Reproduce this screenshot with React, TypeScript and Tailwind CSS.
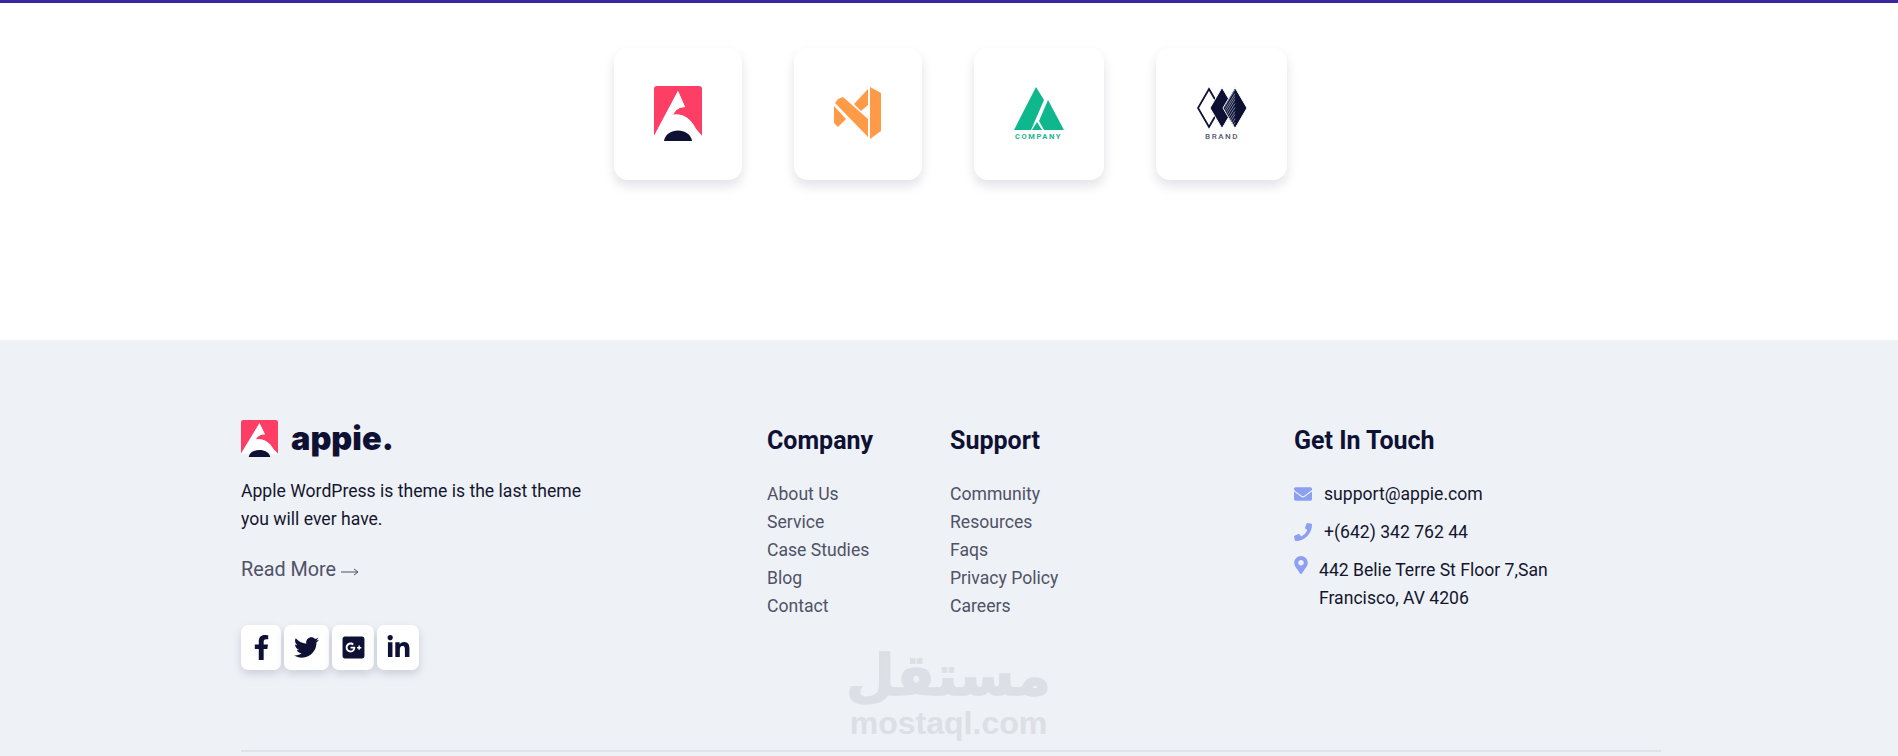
import React from 'react';
import { FaEnvelope, FaFacebookF, FaGooglePlusSquare, FaLinkedinIn, FaMapMarkerAlt, FaPhoneAlt, FaTwitter } from 'react-icons/fa';

const AppieMark = ({ className }: { className: string }) => (
  <svg viewBox="0 0 48 55" preserveAspectRatio="none" className={className}>
    <path d="M3 0H45Q48 0 48 3V50L42 43C36 31 27 27 19 29C21 24 25 21 31 21L24 5L0 50V3Q0 0 3 0Z" fill="#ff3e66" />
    <path d="M24 5L31 21C25 21 21 24 19 29C27 27 36 31 42 43L48 50H0Z" fill="#fff" />
    <path d="M10 55C12 41 36 41 38 55Z" fill="#0e1133" />
  </svg>
);

const OrangeMark = () => (
  <svg viewBox="0 0 48 53" className="mb-[2px] h-[53px] w-[48px]">
    <g fill="#ff9b47">
      <path d="M36 0L47 6V44L36 52Z" />
      <path d="M1 16L4 12L9 10L34 32V50Z" />
      <path d="M34 2V18L27 24L20 17Z" />
      <path d="M0 19L12 32L4 40L0 36Z" />
    </g>
  </svg>
);

const CompanyMark = () => (
  <div className="mb-px flex flex-col items-center">
    <svg viewBox="0 0 50 43" className="h-[43px] w-[50px]">
      <g fill="#0fb78d">
        <path d="M22 0L30 13L17 43H0Z" />
        <path d="M34 13L50 43H30L25 34Z" />
        <path d="M23 35L28 43H18Z" />
      </g>
    </svg>
    <span className="mt-[3px] font-['Roboto',sans-serif] text-[7.5px] leading-[8px] font-bold tracking-[1.6px] text-[#1ab58e]">COMPANY</span>
  </div>
);

const BrandMark = () => (
  <div className="mb-px ml-[2px] flex flex-col items-center">
    <svg viewBox="0 0 50 41" className="h-[42px] w-[50px]">
      <path d="M12 1.5L23 20.5L12 39.5L1 20.5Z" fill="none" stroke="#0e1133" strokeWidth="1.8" />
      <path d="M25 0L37 20.5L25 41L13 20.5Z" fill="#0e1133" stroke="#fff" strokeWidth="1" />
      <path d="M38 0L50 20.5L38 41L26 20.5Z" fill="#0e1133" stroke="#fff" strokeWidth="1" />
      <g stroke="#9ea3bd" strokeWidth="0.8">
        <path d="M27 20L38 2M28 22L38 6M28.5 24L38 9M29.5 26L38 12M30.5 28L38 16M31.5 30L38 20M32.5 32L38 24M33.5 34L38 27M35 36L38 31M36 38L38 35" />
      </g>
    </svg>
    <span className="mt-[4px] font-['Roboto',sans-serif] text-[8px] leading-[8px] font-medium tracking-[1.5px] text-[#55566b]">BRAND</span>
  </div>
);

const cards = [
  { width: 'w-[128px]', mark: <AppieMark className="mb-px h-[55px] w-[48px]" /> },
  { width: 'w-[128px]', mark: <OrangeMark /> },
  { width: 'w-[130px]', mark: <CompanyMark /> },
  { width: 'w-[131px]', mark: <BrandMark /> },
];

const socials = [
  { width: 'w-[40px]', icon: <FaFacebookF className="h-[25px] w-[25px]" /> },
  { width: 'w-[45px]', icon: <FaTwitter className="h-[25px] w-[25px]" /> },
  { width: 'w-[42px]', icon: <FaGooglePlusSquare className="h-[25px] w-[25px]" /> },
  { width: 'w-[42px]', icon: <FaLinkedinIn className="h-[25px] w-[25px]" /> },
];

const LinkColumn = ({ title, links, width }: { title: string; links: string[]; width: string }) => (
  <div className={width}>
    <h4 className="text-[25px] leading-[42px] font-bold text-[#0e1133]">{title}</h4>
    <ul className="mt-[18px] text-[17.6px] leading-[28px] text-[#505267]">
      {links.map((link) => (
        <li key={link}>{link}</li>
      ))}
    </ul>
  </div>
);

export default function App() {
  return (
    <div className="relative h-[756px] overflow-hidden bg-white font-['Roboto',sans-serif]">
      <div className="h-[3px] bg-[#3b26a0]" />

      {/* Brand cards */}
      <section className="flex h-[337px] justify-center gap-[52px] pt-[45px] pl-[2px]">
        {cards.map((card, index) => (
          <div
            key={index}
            className={`${card.width} flex h-[132px] items-center justify-center rounded-[14px] bg-white shadow-[0_6px_12px_rgba(14,17,51,0.12)]`}
          >
            {card.mark}
          </div>
        ))}
      </section>

      {/* Footer */}
      <footer className="h-[416px] bg-[#eef1f6] pt-[80px] pl-[241px]">
        <div className="flex h-[332px] w-[1420px] border-b-2 border-[#e0e4ea]">
          <div className="w-[526px]">
            <div className="flex h-[37px] items-center gap-[13px]">
              <AppieMark className="h-[37px] w-[37px]" />
              <span className="font-['Inter',sans-serif] text-[32.5px] leading-[37px] font-black text-[#0e1133]">appie.</span>
            </div>
            <p className="mt-[20px] text-[17.6px] leading-[28px] text-[#14162f]">
              Apple WordPress is theme is the last theme
              <br />
              you will ever have.
            </p>
            <a className="mt-[23px] flex items-center gap-[5px] text-[19.8px] leading-[28px] text-[#505267]">
              Read More
              <svg viewBox="0 0 18 10" className="mt-[3px] h-[10px] w-[18px]" fill="none" stroke="#505267" strokeWidth="1">
                <path d="M0 5H17M13 2L17 5L13 8" />
              </svg>
            </a>
            <div className="mt-[41px] flex gap-[3px]">
              {socials.map((social, index) => (
                <div
                  key={index}
                  className={`${social.width} flex h-[45px] items-center justify-center rounded-[7px] bg-white text-[#0e1133] shadow-[0_4px_8px_rgba(14,17,51,0.15)]`}
                >
                  {social.icon}
                </div>
              ))}
            </div>
          </div>

          <LinkColumn title="Company" width="w-[183px]" links={['About Us', 'Service', 'Case Studies', 'Blog', 'Contact']} />
          <LinkColumn title="Support" width="w-[344px]" links={['Community', 'Resources', 'Faqs', 'Privacy Policy', 'Careers']} />

          <div>
            <h4 className="text-[25px] leading-[42px] font-bold text-[#0e1133]">Get In Touch</h4>
            <div className="mt-[18px] text-[17.6px] leading-[28px] text-[#14162f]">
              <div className="flex items-center">
                <FaEnvelope className="h-[18px] w-[18px] text-[#8c9ff0]" />
                <span className="ml-[12px]">support@appie.com</span>
              </div>
              <div className="mt-[10px] flex items-center">
                <FaPhoneAlt className="h-[18px] w-[18px] -scale-x-100 text-[#8c9ff0]" />
                <span className="ml-[12px]">+(642) 342 762 44</span>
              </div>
              <div className="mt-[10px] flex">
                <FaMapMarkerAlt className="h-[18px] w-[14px] text-[#8c9ff0]" />
                <span className="ml-[11px]">
                  442 Belie Terre St Floor 7,San
                  <br />
                  Francisco, AV 4206
                </span>
              </div>
            </div>
          </div>
        </div>
      </footer>

      {/* Watermark */}
      <div className="absolute top-[646px] left-[850px] flex w-[197px] flex-col items-center text-[#dcdfe5]">
        <span className="font-['DejaVu_Sans',sans-serif] text-[56px] leading-[59px] font-bold [-webkit-text-stroke:1.5px_#dcdfe5]">مستقل</span>
        <span className="font-['Liberation_Sans',sans-serif] text-[32px] leading-[36px] font-bold">mostaql.com</span>
      </div>
    </div>
  );
}
